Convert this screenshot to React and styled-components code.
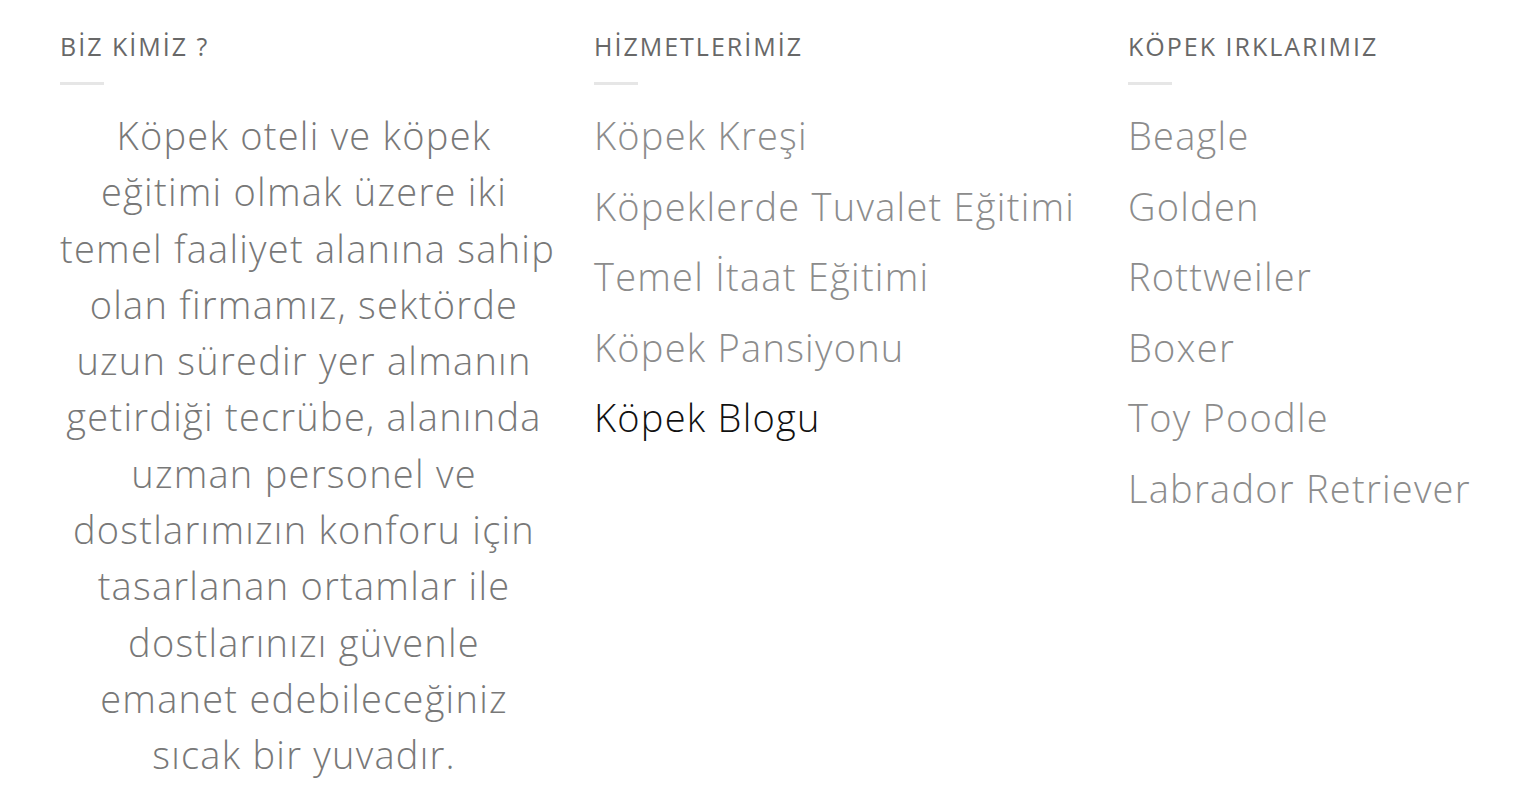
import React from 'react';
import styled, { createGlobalStyle } from 'styled-components';

const GlobalStyle = createGlobalStyle`
  html, body {
    margin: 0;
    padding: 0;
    background: #fff;
    overflow: hidden;
  }
  body {
    font-family: "Open Sans", "Liberation Sans", sans-serif;
  }
`;

const Footer = styled.footer`
  width: 1536px;
  height: 794px;
  overflow: hidden;
  box-sizing: border-box;
  padding: 30px 0 0 60px;
  display: grid;
  grid-template-columns: repeat(3, 488px);
  column-gap: 46px;
  align-items: start;
`;

const Column = styled.section`
  display: flex;
  flex-direction: column;
`;

const Heading = styled.h4`
  margin: 0;
  font-size: 25px;
  line-height: 32px;
  font-weight: 500;
  color: #686868;
  letter-spacing: 2px;
  white-space: nowrap;
`;

const Bar = styled.span`
  display: block;
  width: 44px;
  height: 3px;
  background: #e6e6e6;
  margin: 20px 0 22px;
`;

const About = styled.p`
  margin: 0;
  font-size: 38px;
  font-weight: 300;
  letter-spacing: 1.25px;
  line-height: 56.3px;
  color: #787878;
  text-align: center;
  white-space: nowrap;
`;

const LinkList = styled.ul`
  list-style: none;
  margin: 0;
  padding: 0;
  display: flex;
  flex-direction: column;
`;

const Item = styled.li`
  font-size: 38px;
  font-weight: 300;
  letter-spacing: 1.25px;
  line-height: 70.6px;
  margin-top: ${p => (p.$first ? '-7px' : '0')};
  white-space: nowrap;
`;

const Link = styled.a`
  color: ${p => (p.$active ? '#111' : '#8c8c8c')};
  text-decoration: none;
`;

const aboutLines = [
  'Köpek oteli ve köpek',
  'eğitimi olmak üzere iki',
  'temel faaliyet alanına sahip',
  'olan firmamız, sektörde',
  'uzun süredir yer almanın',
  'getirdiği tecrübe, alanında',
  'uzman personel ve',
  'dostlarımızın konforu için',
  'tasarlanan ortamlar ile',
  'dostlarınızı güvenle',
  'emanet edebileceğiniz',
  'sıcak bir yuvadır.',
];

const services = [
  'Köpek Kreşi',
  'Köpeklerde Tuvalet Eğitimi',
  'Temel İtaat Eğitimi',
  'Köpek Pansiyonu',
  'Köpek Blogu',
];

const breeds = ['Beagle', 'Golden', 'Rottweiler', 'Boxer', 'Toy Poodle', 'Labrador Retriever'];

const Links = ({ items, active }) => (
  <LinkList>
    {items.map((name, i) => (
      <Item key={name} $first={i === 0}>
        <Link href="#" $active={name === active}>{name}</Link>
      </Item>
    ))}
  </LinkList>
);

export default function App() {
  return (
    <>
      <GlobalStyle />
      <Footer>
        <Column>
          <Heading>BİZ KİMİZ ?</Heading>
          <Bar />
          <About>
            {aboutLines.map((line, i) => (
              <React.Fragment key={i}>
                {line}
                {i < aboutLines.length - 1 && <br />}
              </React.Fragment>
            ))}
          </About>
        </Column>
        <Column>
          <Heading>HİZMETLERİMİZ</Heading>
          <Bar />
          <Links items={services} active="Köpek Blogu" />
        </Column>
        <Column>
          <Heading>KÖPEK IRKLARIMIZ</Heading>
          <Bar />
          <Links items={breeds} />
        </Column>
      </Footer>
    </>
  );
}
